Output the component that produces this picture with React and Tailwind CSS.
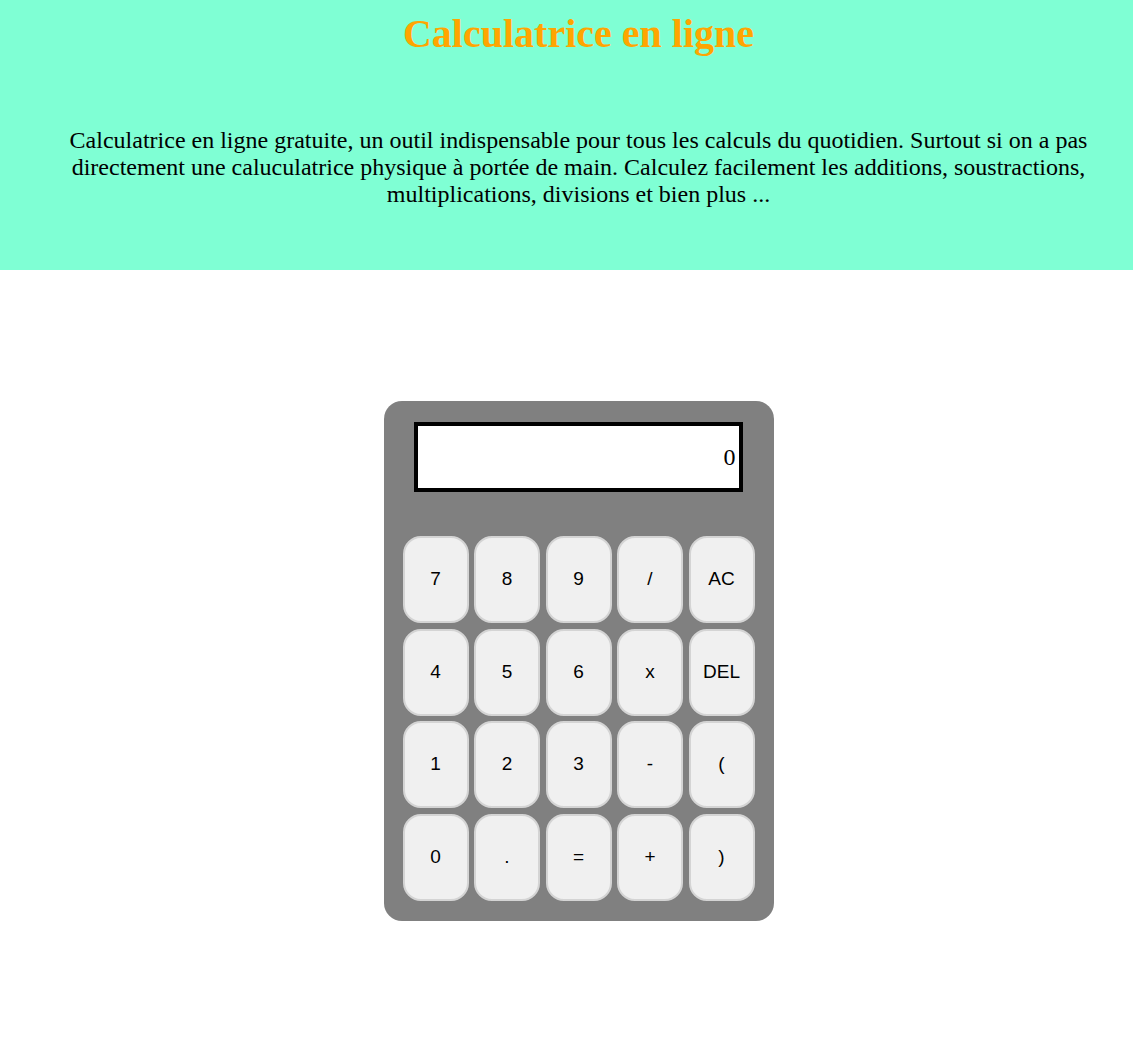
import React from 'react';

const keys = ['7', '8', '9', '/', 'AC', '4', '5', '6', 'x', 'DEL', '1', '2', '3', '-', '(', '0', '.', '=', '+', ')'];

const App = () => {
  return (
    <div className="min-h-[1039px] bg-white" style={{ fontFamily: '"Liberation Serif", "Times New Roman", serif' }}>
      <header className="h-[270px] bg-[#7fffd4] pt-[11px] pl-[58px] pr-[34px] text-center">
        <h1 className="text-[40px] leading-[46px] font-bold text-[#ffa500]">Calculatrice en ligne</h1>
        <p className="mt-[70px] text-[24px] leading-[27px] text-black">
          Calculatrice en ligne gratuite, un outil indispensable pour tous les calculs du quotidien. Surtout si on a pas directement une caluculatrice physique à portée de main. Calculez facilement les additions, soustractions, multiplications, divisions et bien plus ...
        </p>
      </header>

      <main className="flex justify-center pt-[131px] pl-[24px]">
        <div className="w-[390px] h-[520px] rounded-[18px] bg-[#808080] pt-[21px] px-[19px]">
          <div className="ml-[11px] w-[329px] h-[70px] border-4 border-black bg-white flex items-center justify-end pr-[3px] text-[24px]">
            0
          </div>
          <div className="mt-[44px] grid grid-cols-[repeat(5,66px)] grid-rows-[repeat(4,87px)] gap-x-[5.5px] gap-y-[5.5px]">
            {keys.map(k => (
              <button
                key={k}
                className="rounded-[18px] border-2 border-[#d4d4d4] bg-[#f0f0f0] text-[19px] text-black flex items-center justify-center"
                style={{ fontFamily: '"Liberation Sans", Arial, sans-serif' }}
              >
                {k}
              </button>
            ))}
          </div>
        </div>
      </main>
    </div>
  );
};

export default App;
